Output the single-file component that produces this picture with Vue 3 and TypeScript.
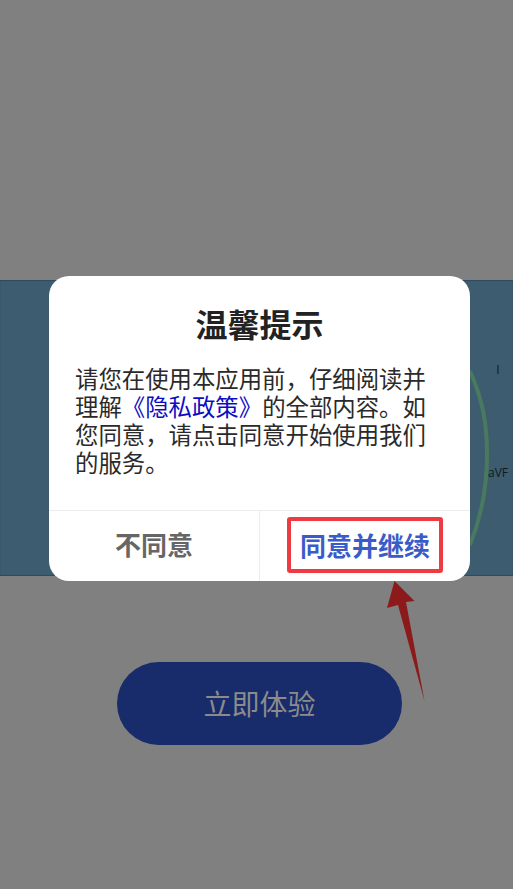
<script setup lang="ts">
const lead = '请您在使用本应用前，仔细阅读并理解'
const tail = '的全部内容。如您同意，请点击同意开始使用我们的服务。'
</script>

<template>
  <div class="page">
    <section class="banner">
      <svg class="arc" width="30" height="200" viewBox="0 0 30 200">
        <path d="M0 16 C14 48 17 72 17 100 C17 130 12 160 0 190" fill="none" stroke="#497a5f" stroke-width="4" />
      </svg>
      <span class="lead lead-i">I</span>
      <span class="lead lead-avf">aVF</span>
    </section>

    <button class="start" type="button">立即体验</button>

    <div class="dialog">
      <h1 class="title">温馨提示</h1>
      <p class="message">{{ lead }}<span class="link">《隐私政策》</span>{{ tail }}</p>
      <div class="actions">
        <button class="action decline" type="button"><span class="decline-label">不同意</span></button>
        <button class="action accept" type="button"><span class="highlight">同意并继续</span></button>
      </div>
    </div>

    <svg class="arrow" width="44" height="122" viewBox="0 0 44 122">
      <path d="M7.5 1 L27.5 21 L19 22 L37.5 121 L11 25 L0 28 Z" fill="#8c1a1a" />
    </svg>
  </div>
</template>

<style>
html, body { margin: 0; background: #808080; }
</style>

<style scoped>
.page {
  position: relative;
  width: 513px;
  height: 889px;
  padding-top: 280px;
  box-sizing: border-box;
  overflow: hidden;
  background: #808080;
  font-family: "Noto Sans CJK SC", "Noto Sans", sans-serif;
  display: flex;
  flex-direction: column;
  align-items: center;
}
.banner {
  position: relative;
  flex: none;
  width: 100%;
  height: 296px;
  background: #3d5c70;
  box-shadow: inset 0 1px 1px #2f4a5e, inset 0 -1px 1px #2f4a5e;
}
.arc { position: absolute; left: 470px; top: 75px; }
.lead {
  position: absolute;
  font-family: "Open Sans", "Noto Sans", sans-serif;
  font-size: 12px;
  line-height: 14px;
  color: #101820;
  transform: translateX(-50%);
  left: 498px;
}
.lead-i { top: 83px; }
.lead-avf { top: 186px; }
.start {
  flex: none;
  margin-top: 86px;
  margin-left: 6px;
  width: 285px;
  height: 83px;
  border: 0;
  border-radius: 42px;
  background: #182c6c;
  color: #8b8b8b;
  font: 28px/83px "Noto Sans CJK SC", sans-serif;
  padding: 0;
}
.dialog {
  position: absolute;
  left: 49px;
  top: 276px;
  width: 421px;
  height: 305px;
  background: #fff;
  border-radius: 20px;
  display: flex;
  flex-direction: column;
  overflow: hidden;
}
.title {
  margin: 0;
  padding-top: 24px;
  height: 46px;
  line-height: 46px;
  text-align: center;
  font-size: 32px;
  font-weight: 700;
  color: #222;
}
.message {
  margin: 18px 0 0;
  padding: 0 43px 0 26px;
  flex: 1;
  font-size: 23.4px;
  line-height: 28px;
  color: #2a2a2a;
}
.link { color: #0c0cc4; display: inline-block; }
.actions {
  flex: none;
  height: 70px;
  display: flex;
  border-top: 1px solid #ececec;
}
.action {
  flex: none;
  border: 0;
  background: none;
  padding: 0;
  font-family: inherit;
  font-size: 26px;
  font-weight: 700;
  display: flex;
  align-items: center;
  justify-content: center;
}
.decline { width: 211px; color: #666; border-right: 1px solid #ececec; padding-bottom: 4px; }
.decline-label { line-height: 36px; }
.accept { width: 209px; color: #3a5cc8; padding-bottom: 3px; }
.highlight {
  box-sizing: border-box;
  width: 156px;
  height: 56px;
  margin-left: 1px;
  line-height: 48px;
  border: 4px solid #ee3b42;
  border-radius: 3px;
  white-space: nowrap;
  text-align: center;
}
.arrow { position: absolute; left: 387px; top: 580px; }
</style>
